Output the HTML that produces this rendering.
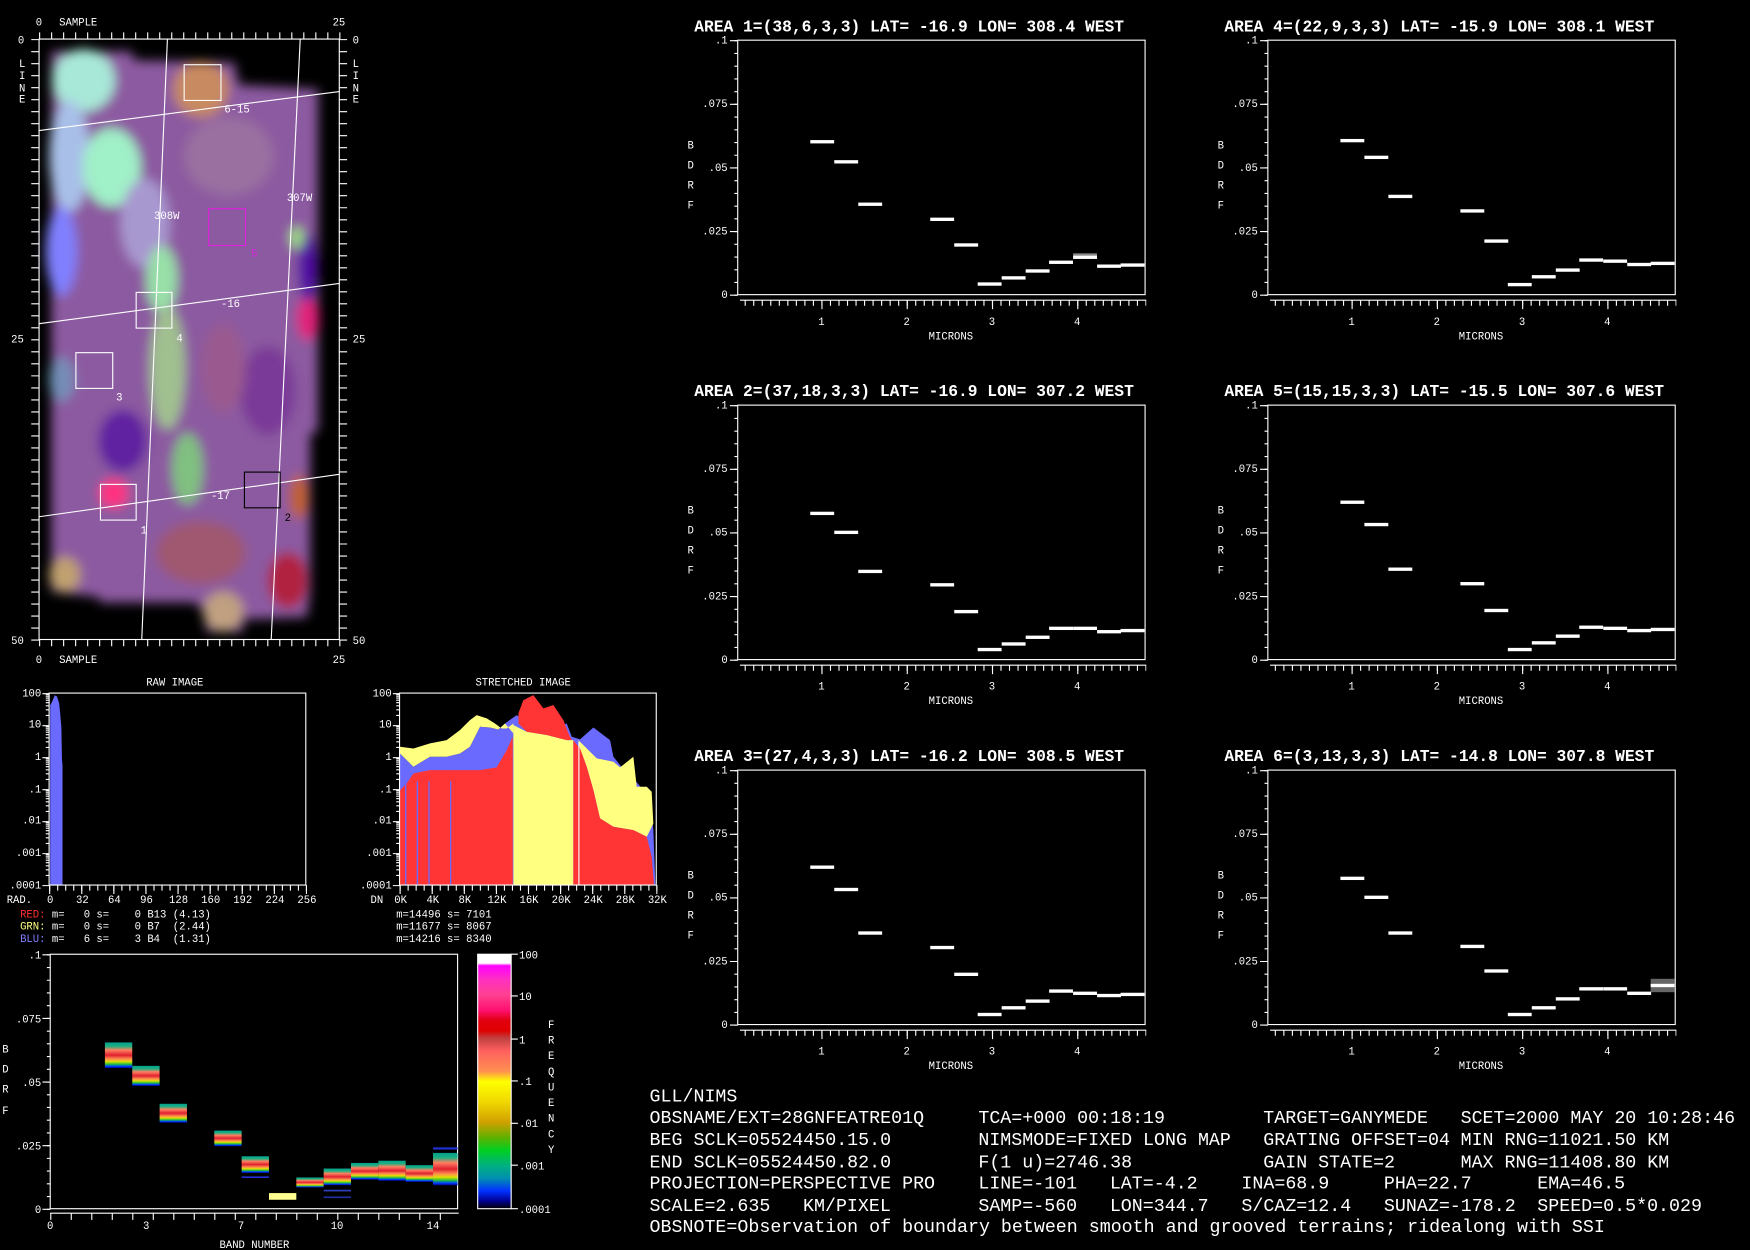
<!DOCTYPE html>
<html><head><meta charset="utf-8"><style>
html,body{margin:0;padding:0;background:#000;width:1750px;height:1250px;overflow:hidden}
svg{display:block}
text{font-family:"Liberation Mono",monospace;fill:#fff}
.s{font-size:9.5px}
.t{font-size:14.6px;font-weight:bold}
.b{font-size:16.4px}
</style></head><body>
<svg width="1750" height="1250" viewBox="0 0 1568 1120" xmlns="http://www.w3.org/2000/svg" xmlns:xlink="http://www.w3.org/1999/xlink">
<defs>
<filter id="bl" x="-10%" y="-10%" width="120%" height="120%"><feGaussianBlur stdDeviation="5"/></filter>
<linearGradient id="cb" x1="0" y1="0" x2="0" y2="1">
<stop offset="0" stop-color="#fff"/><stop offset="0.035" stop-color="#fff"/><stop offset="0.045" stop-color="#ff00ff"/>
<stop offset="0.1" stop-color="#ff30c0"/><stop offset="0.16" stop-color="#ff4090"/><stop offset="0.22" stop-color="#ff1070"/>
<stop offset="0.26" stop-color="#e00010"/><stop offset="0.3" stop-color="#e00000"/><stop offset="0.33" stop-color="#c04040"/>
<stop offset="0.38" stop-color="#ff6060"/><stop offset="0.46" stop-color="#ff9050"/>
<stop offset="0.5" stop-color="#ffff00"/><stop offset="0.58" stop-color="#f0d800"/><stop offset="0.66" stop-color="#d0a000"/>
<stop offset="0.72" stop-color="#60b000"/><stop offset="0.77" stop-color="#00d020"/><stop offset="0.83" stop-color="#00b080"/>
<stop offset="0.88" stop-color="#0090b0"/><stop offset="0.93" stop-color="#0030ff"/><stop offset="0.97" stop-color="#000090"/><stop offset="1" stop-color="#000"/>
</linearGradient>
<linearGradient id="bk" x1="0" y1="0" x2="0" y2="1">
<stop offset="0" stop-color="#00a090"/><stop offset="0.15" stop-color="#20b080"/><stop offset="0.3" stop-color="#ff8060"/>
<stop offset="0.5" stop-color="#e02030"/><stop offset="0.65" stop-color="#ff9050"/><stop offset="0.75" stop-color="#e0e000"/>
<stop offset="0.85" stop-color="#20c040"/><stop offset="0.93" stop-color="#0040ff"/><stop offset="1" stop-color="#000090"/>
</linearGradient>
<g id="fr" stroke="#fff" fill="none">
<rect x="661" y="36" width="365" height="228"/>
<line x1="659.5" y1="36" x2="659.5" y2="265" stroke-width="3" stroke-dasharray="1 10.4"/>
<line x1="657.5" y1="36" x2="657.5" y2="265" stroke-width="7" stroke-dasharray="1 56"/>
<line x1="663" y1="269" x2="1027" y2="269"/>
<line x1="667.2" y1="271.5" x2="1027" y2="271.5" stroke-width="5" stroke-dasharray="1 6.64"/>
<line x1="736" y1="273" x2="967" y2="273" stroke-width="8" stroke-dasharray="1 75.4"/>
</g>
<path id="dec" d="M-3,20.04h3M-3,14.99h3M-3,11.41h3M-3,8.63h3M-3,6.36h3M-3,4.44h3M-3,2.78h3M-3,1.31h3" stroke="#fff" fill="none"/>
<g id="hx" stroke="#fff" fill="none">
<rect x="0" y="621" width="230" height="172"/>
<line x1="-3" y1="621" x2="-3" y2="794" stroke-width="6" stroke-dasharray="1 27.67"/>
<use xlink:href="#dec" y="621"/><use xlink:href="#dec" y="649.67"/><use xlink:href="#dec" y="678.33"/>
<use xlink:href="#dec" y="707"/><use xlink:href="#dec" y="735.67"/><use xlink:href="#dec" y="764.33"/>
<line x1="0" y1="795.5" x2="231" y2="795.5" stroke-width="5" stroke-dasharray="1 6.19"/>
<line x1="0" y1="797" x2="231" y2="797" stroke-width="8" stroke-dasharray="1 27.76"/>
</g>
</defs>

<!-- top-left image -->
<g filter="url(#bl)">
<polygon points="46,46 118,46 120,54 210,56 214,76 285,80 285,385 278,390 278,530 275,553 218,555 218,566 185,566 183,548 175,540 90,540 88,535 46,530" fill="#8c5aa0"/>
<ellipse cx="75" cy="72" rx="28" ry="28" fill="#a8e8d8"/>
<ellipse cx="62" cy="140" rx="18" ry="50" fill="#a8c0e8"/>
<ellipse cx="100" cy="150" rx="26" ry="35" fill="#a0f0c8"/>
<ellipse cx="55" cy="225" rx="14" ry="40" fill="#8080ff"/>
<ellipse cx="180" cy="80" rx="25" ry="25" fill="#c88a60"/>
<ellipse cx="205" cy="140" rx="40" ry="35" fill="#9a70a0"/>
<ellipse cx="130" cy="200" rx="22" ry="40" fill="#a898d0"/>
<ellipse cx="145" cy="250" rx="14" ry="30" fill="#98e0a8"/>
<ellipse cx="150" cy="330" rx="16" ry="55" fill="#a0c090"/>
<ellipse cx="110" cy="395" rx="22" ry="28" fill="#6020a0"/>
<ellipse cx="168" cy="420" rx="14" ry="32" fill="#80c080"/>
<ellipse cx="102" cy="442" rx="13" ry="13" fill="#ff3080"/>
<ellipse cx="276" cy="285" rx="10" ry="20" fill="#e0207a"/>
<ellipse cx="276" cy="240" rx="9" ry="30" fill="#5010a0"/>
<ellipse cx="266" cy="213" rx="6" ry="10" fill="#a0e080"/>
<ellipse cx="58" cy="515" rx="14" ry="16" fill="#c0a070"/>
<ellipse cx="200" cy="548" rx="18" ry="18" fill="#c0a080"/>
<ellipse cx="258" cy="520" rx="18" ry="25" fill="#b02040"/>
<ellipse cx="180" cy="495" rx="40" ry="28" fill="#a05870"/>
<ellipse cx="268" cy="445" rx="9" ry="20" fill="#c06030"/>
<ellipse cx="240" cy="350" rx="25" ry="40" fill="#7a3a98"/>
<ellipse cx="200" cy="330" rx="20" ry="40" fill="#9a5a90"/>
<ellipse cx="55" cy="340" rx="12" ry="20" fill="#60c0d0" opacity="0.5"/>
</g>
<g stroke="#fff" stroke-width="1" fill="none">
<rect x="35" y="35" width="269" height="538"/>
<line x1="35" y1="32" x2="306" y2="32" stroke-width="6" stroke-dasharray="1 9.76"/>
<line x1="35" y1="576" x2="306" y2="576" stroke-width="6" stroke-dasharray="1 9.76"/>
<line x1="31.5" y1="35" x2="31.5" y2="575" stroke-width="7" stroke-dasharray="1 9.76"/>
<line x1="307.5" y1="35" x2="307.5" y2="575" stroke-width="7" stroke-dasharray="1 9.76"/>
<polyline points="150,35 127,573"/><polyline points="269,35 243,573"/>
<polyline points="35,117 304,82"/><polyline points="35,290 304,254"/><polyline points="35,463 304,425"/>
<rect x="165" y="58" width="33" height="32"/><rect x="122" y="262" width="32" height="32"/>
<rect x="68" y="316" width="33" height="32"/><rect x="90" y="434" width="32" height="32"/>
<rect x="187" y="187" width="33" height="33" stroke="#e020e0"/>
<rect x="219" y="423" width="32" height="32" stroke="#000"/>
</g>
<g class="s">
<text x="201" y="101">6-15</text><text x="138" y="196">308W</text><text x="257" y="180">307W</text>
<text x="225" y="230" style="fill:#e020e0">5</text><text x="198" y="275">-16</text><text x="158" y="306">4</text>
<text x="104" y="359">3</text><text x="189" y="447">-17</text><text x="126" y="478">1</text><text x="255" y="467" style="fill:#000">2</text>
<text x="32" y="23">0</text><text x="53" y="23">SAMPLE</text><text x="298" y="23">25</text>
<text x="32" y="594">0</text><text x="53" y="594">SAMPLE</text><text x="298" y="594">25</text>
<text x="16" y="39">0</text><text x="10" y="307">25</text><text x="10" y="577">50</text>
<text x="316" y="39">0</text><text x="316" y="307">25</text><text x="316" y="577">50</text>
<text x="17" y="60">L</text><text x="17" y="71">I</text><text x="17" y="82">N</text><text x="17" y="92">E</text>
<text x="316" y="60">L</text><text x="316" y="71">I</text><text x="316" y="82">N</text><text x="316" y="92">E</text>
</g>

<!-- plot titles -->
<g class="t">
<text x="622" y="28">AREA 1=(38,6,3,3) LAT= -16.9 LON= 308.4 WEST</text>
<text x="1097" y="28">AREA 4=(22,9,3,3) LAT= -15.9 LON= 308.1 WEST</text>
<text x="622" y="355">AREA 2=(37,18,3,3) LAT= -16.9 LON= 307.2 WEST</text>
<text x="1097" y="355">AREA 5=(15,15,3,3) LAT= -15.5 LON= 307.6 WEST</text>
<text x="622" y="682">AREA 3=(27,4,3,3) LAT= -16.2 LON= 308.5 WEST</text>
<text x="1097" y="682">AREA 6=(3,13,3,3) LAT= -14.8 LON= 307.8 WEST</text>
</g>

<!-- plot 1 -->
<g transform="translate(0,0)">
<use xlink:href="#fr"/>
<g class="s"><text x="652" y="39" text-anchor="end">.1</text><text x="652" y="96" text-anchor="end">.075</text><text x="652" y="153" text-anchor="end">.05</text><text x="652" y="210" text-anchor="end">.025</text><text x="652" y="267" text-anchor="end">0</text>
<text x="616" y="133">B</text><text x="616" y="151">D</text><text x="616" y="169">R</text><text x="616" y="187">F</text>
<text x="736" y="291" text-anchor="middle">1</text><text x="812.4" y="291" text-anchor="middle">2</text><text x="888.8" y="291" text-anchor="middle">3</text><text x="965.2" y="291" text-anchor="middle">4</text>
<text x="852" y="304" text-anchor="middle">MICRONS</text></g>
<g fill="#fff">
<rect x="961.5" y="227" width="21.4" height="2" fill="#888"/>
<rect x="726" y="125.5" width="21.4" height="3"/><rect x="747.5" y="143.5" width="21.4" height="3"/><rect x="769" y="181.5" width="21.4" height="3"/>
<rect x="833.5" y="195" width="21.4" height="3"/><rect x="855" y="218" width="21.4" height="3"/><rect x="876" y="253" width="21.4" height="3"/>
<rect x="897.5" y="247.5" width="21.4" height="3"/><rect x="919" y="241.3" width="21.4" height="3"/><rect x="940" y="233.5" width="21.4" height="3"/>
<rect x="961.5" y="229" width="21.4" height="3"/><rect x="983" y="237" width="21.4" height="3"/><rect x="1004" y="236" width="21.4" height="3"/>
</g></g>

<!-- plot 4 -->
<g transform="translate(475,0)">
<use xlink:href="#fr"/>
<g class="s"><text x="652" y="39" text-anchor="end">.1</text><text x="652" y="96" text-anchor="end">.075</text><text x="652" y="153" text-anchor="end">.05</text><text x="652" y="210" text-anchor="end">.025</text><text x="652" y="267" text-anchor="end">0</text>
<text x="616" y="133">B</text><text x="616" y="151">D</text><text x="616" y="169">R</text><text x="616" y="187">F</text>
<text x="736" y="291" text-anchor="middle">1</text><text x="812.4" y="291" text-anchor="middle">2</text><text x="888.8" y="291" text-anchor="middle">3</text><text x="965.2" y="291" text-anchor="middle">4</text>
<text x="852" y="304" text-anchor="middle">MICRONS</text></g>
<g fill="#fff">
<rect x="726" y="124.5" width="21.4" height="3"/><rect x="747.5" y="139.5" width="21.4" height="3"/><rect x="769" y="174.5" width="21.4" height="3"/>
<rect x="833.5" y="187.5" width="21.4" height="3"/><rect x="855" y="214.5" width="21.4" height="3"/><rect x="876" y="253.5" width="21.4" height="3"/>
<rect x="897.5" y="246.5" width="21.4" height="3"/><rect x="919" y="240.5" width="21.4" height="3"/><rect x="940" y="231.5" width="21.4" height="3"/>
<rect x="961.5" y="232.5" width="21.4" height="3"/><rect x="983" y="235.5" width="21.4" height="3"/><rect x="1004" y="234.5" width="21.4" height="3"/>
</g></g>

<!-- plot 2 -->
<g transform="translate(0,327)">
<use xlink:href="#fr"/>
<g class="s"><text x="652" y="39" text-anchor="end">.1</text><text x="652" y="96" text-anchor="end">.075</text><text x="652" y="153" text-anchor="end">.05</text><text x="652" y="210" text-anchor="end">.025</text><text x="652" y="267" text-anchor="end">0</text>
<text x="616" y="133">B</text><text x="616" y="151">D</text><text x="616" y="169">R</text><text x="616" y="187">F</text>
<text x="736" y="291" text-anchor="middle">1</text><text x="812.4" y="291" text-anchor="middle">2</text><text x="888.8" y="291" text-anchor="middle">3</text><text x="965.2" y="291" text-anchor="middle">4</text>
<text x="852" y="304" text-anchor="middle">MICRONS</text></g>
<g fill="#fff">
<rect x="726" y="131.5" width="21.4" height="3"/><rect x="747.5" y="148.5" width="21.4" height="3"/><rect x="769" y="183.5" width="21.4" height="3"/>
<rect x="833.5" y="195.5" width="21.4" height="3"/><rect x="855" y="219.5" width="21.4" height="3"/><rect x="876" y="253.5" width="21.4" height="3"/>
<rect x="897.5" y="248.5" width="21.4" height="3"/><rect x="919" y="242.5" width="21.4" height="3"/><rect x="940" y="234.5" width="21.4" height="3"/>
<rect x="961.5" y="234.5" width="21.4" height="3"/><rect x="983" y="237.5" width="21.4" height="3"/><rect x="1004" y="236.5" width="21.4" height="3"/>
</g></g>

<!-- plot 5 -->
<g transform="translate(475,327)">
<use xlink:href="#fr"/>
<g class="s"><text x="652" y="39" text-anchor="end">.1</text><text x="652" y="96" text-anchor="end">.075</text><text x="652" y="153" text-anchor="end">.05</text><text x="652" y="210" text-anchor="end">.025</text><text x="652" y="267" text-anchor="end">0</text>
<text x="616" y="133">B</text><text x="616" y="151">D</text><text x="616" y="169">R</text><text x="616" y="187">F</text>
<text x="736" y="291" text-anchor="middle">1</text><text x="812.4" y="291" text-anchor="middle">2</text><text x="888.8" y="291" text-anchor="middle">3</text><text x="965.2" y="291" text-anchor="middle">4</text>
<text x="852" y="304" text-anchor="middle">MICRONS</text></g>
<g fill="#fff">
<rect x="726" y="121.5" width="21.4" height="3"/><rect x="747.5" y="141.5" width="21.4" height="3"/><rect x="769" y="181.5" width="21.4" height="3"/>
<rect x="833.5" y="194.5" width="21.4" height="3"/><rect x="855" y="218.5" width="21.4" height="3"/><rect x="876" y="253.5" width="21.4" height="3"/>
<rect x="897.5" y="247.5" width="21.4" height="3"/><rect x="919" y="241.5" width="21.4" height="3"/><rect x="940" y="233.5" width="21.4" height="3"/>
<rect x="961.5" y="234.5" width="21.4" height="3"/><rect x="983" y="236.5" width="21.4" height="3"/><rect x="1004" y="235.5" width="21.4" height="3"/>
</g></g>

<!-- plot 3 -->
<g transform="translate(0,654)">
<use xlink:href="#fr"/>
<g class="s"><text x="652" y="39" text-anchor="end">.1</text><text x="652" y="96" text-anchor="end">.075</text><text x="652" y="153" text-anchor="end">.05</text><text x="652" y="210" text-anchor="end">.025</text><text x="652" y="267" text-anchor="end">0</text>
<text x="616" y="133">B</text><text x="616" y="151">D</text><text x="616" y="169">R</text><text x="616" y="187">F</text>
<text x="736" y="291" text-anchor="middle">1</text><text x="812.4" y="291" text-anchor="middle">2</text><text x="888.8" y="291" text-anchor="middle">3</text><text x="965.2" y="291" text-anchor="middle">4</text>
<text x="852" y="304" text-anchor="middle">MICRONS</text></g>
<g fill="#fff">
<rect x="726" y="121.5" width="21.4" height="3"/><rect x="747.5" y="141.5" width="21.4" height="3"/><rect x="769" y="180.5" width="21.4" height="3"/>
<rect x="833.5" y="193.5" width="21.4" height="3"/><rect x="855" y="217.5" width="21.4" height="3"/><rect x="876" y="253.5" width="21.4" height="3"/>
<rect x="897.5" y="247.5" width="21.4" height="3"/><rect x="919" y="241.5" width="21.4" height="3"/><rect x="940" y="232.5" width="21.4" height="3"/>
<rect x="961.5" y="234.5" width="21.4" height="3"/><rect x="983" y="236.5" width="21.4" height="3"/><rect x="1004" y="235.5" width="21.4" height="3"/>
</g></g>

<!-- plot 6 -->
<g transform="translate(475,654)">
<use xlink:href="#fr"/>
<g class="s"><text x="652" y="39" text-anchor="end">.1</text><text x="652" y="96" text-anchor="end">.075</text><text x="652" y="153" text-anchor="end">.05</text><text x="652" y="210" text-anchor="end">.025</text><text x="652" y="267" text-anchor="end">0</text>
<text x="616" y="133">B</text><text x="616" y="151">D</text><text x="616" y="169">R</text><text x="616" y="187">F</text>
<text x="736" y="291" text-anchor="middle">1</text><text x="812.4" y="291" text-anchor="middle">2</text><text x="888.8" y="291" text-anchor="middle">3</text><text x="965.2" y="291" text-anchor="middle">4</text>
<text x="852" y="304" text-anchor="middle">MICRONS</text></g>
<g fill="#fff">
<rect x="1004" y="223" width="21.4" height="12" fill="#666"/>
<rect x="726" y="131.5" width="21.4" height="3"/><rect x="747.5" y="148.5" width="21.4" height="3"/><rect x="769" y="180.5" width="21.4" height="3"/>
<rect x="833.5" y="192.5" width="21.4" height="3"/><rect x="855" y="214.5" width="21.4" height="3"/><rect x="876" y="253.5" width="21.4" height="3"/>
<rect x="897.5" y="247.5" width="21.4" height="3"/><rect x="919" y="239.5" width="21.4" height="3"/><rect x="940" y="230.5" width="21.4" height="3"/>
<rect x="961.5" y="230.5" width="21.4" height="3"/><rect x="983" y="234.5" width="21.4" height="3"/><rect x="1004" y="227.5" width="21.4" height="3"/>
</g></g>

<!-- histograms -->
<polygon points="45,793 45,632 47,628 49,623 51,624 53,630 54,640 55,652 55.5,680 56,686 56,793" fill="#6a6aff"/>
<g>
<polygon points="358.4,793 358.4,675.1 370.4,687.0 385.3,678.0 400.2,678.0 412.2,675.1 421.1,669.1 430.1,651.2 439.1,651.8 446.5,653.6 452.5,648.2 463.0,640.7 468.9,645.2 489.9,654.1 507.8,648.2 512.3,660.1 519.7,662.5 531.7,651.8 546.6,663.1 549.6,678.0 555.6,685.5 567.5,697.5 576.5,707.9 582.4,716.9 585.4,743.8 587.2,793" fill="#6a6aff"/>
<polygon points="358.4,675.1 358.4,669.1 370.4,670.6 385.3,666.1 400.2,663.1 412.2,654.1 421.1,645.2 427.1,640.7 436.1,643.7 443.5,648.2 449.5,652.7 454.0,652.7 460.0,648.2 460.0,657.1 452.5,648.2 446.5,653.6 439.1,651.8 430.1,651.2 421.1,669.1 412.2,675.1 400.2,678.0 385.3,678.0 370.4,687.0" fill="#ffff80"/>
<polygon points="460.0,793 460.0,649.7 471.9,655.6 489.9,658.6 507.8,663.1 513.7,663.1 513.7,793" fill="#ffff80"/>
<polygon points="518.2,663.1 534.7,679.5 549.6,682.5 555.6,687.6 567.5,678.0 570.5,704.9 579.5,704.9 583.9,709.4 585.4,737.8 579.5,749.7 567.5,743.8 549.6,740.8 537.6,733.3 531.7,707.9 525.7,687.0 519.7,670.6" fill="#ffff80"/>
<polygon points="358.4,793 358.4,707.9 364.4,702.0 370.4,693.0 385.3,690.0 400.2,690.0 415.2,690.0 430.1,690.0 445.0,687.6 454.0,672.1 459.4,660.1 459.4,793" fill="#ff3535"/>
<polygon points="464.5,648.2 464.5,639.2 468.9,627.3 477.9,622.8 486.9,634.7 495.8,631.7 504.8,645.2 509.3,657.1 512.3,663.1 507.8,663.1 489.9,658.6 471.9,655.6" fill="#ff3535"/>
<polygon points="513.7,793 513.7,663.1 519.7,670.6 525.7,687.0 531.7,707.9 537.6,733.3 549.6,740.8 567.5,743.8 579.5,749.7 583.9,767.6 586.0,793" fill="#ff3535"/>
<rect x="362.9" y="700" width="1.2" height="93" fill="#6a6aff"/><rect x="373.4" y="700" width="1.2" height="93" fill="#6a6aff"/>
<rect x="383.8" y="700" width="1.2" height="93" fill="#6a6aff"/><rect x="403.2" y="700" width="1.2" height="93" fill="#6a6aff"/>
<rect x="518.2" y="665" width="1" height="128" fill="#fff"/>
</g>
<use xlink:href="#hx" x="44"/>
<use xlink:href="#hx" x="358"/>
<g class="s">
<text x="131" y="614">RAW IMAGE</text><text x="426" y="614">STRETCHED IMAGE</text>
<text x="37" y="624" text-anchor="end">100</text><text x="37" y="652" text-anchor="end">10</text><text x="37" y="681" text-anchor="end">1</text><text x="37" y="710" text-anchor="end">.1</text><text x="37" y="738" text-anchor="end">.01</text><text x="37" y="767" text-anchor="end">.001</text><text x="37" y="796" text-anchor="end">.0001</text>
<text x="351" y="624" text-anchor="end">100</text><text x="351" y="652" text-anchor="end">10</text><text x="351" y="681" text-anchor="end">1</text><text x="351" y="710" text-anchor="end">.1</text><text x="351" y="738" text-anchor="end">.01</text><text x="351" y="767" text-anchor="end">.001</text><text x="351" y="796" text-anchor="end">.0001</text>
<text x="6" y="809">RAD.</text><text x="332" y="809">DN</text>
<g text-anchor="middle"><text x="45" y="809">0</text><text x="73.8" y="809">32</text><text x="102.5" y="809">64</text><text x="131.3" y="809">96</text><text x="160" y="809">128</text><text x="188.8" y="809">160</text><text x="217.5" y="809">192</text><text x="246.3" y="809">224</text><text x="275" y="809">256</text>
<text x="359" y="809">0K</text><text x="387.8" y="809">4K</text><text x="416.5" y="809">8K</text><text x="445.3" y="809">12K</text><text x="474" y="809">16K</text><text x="502.8" y="809">20K</text><text x="531.5" y="809">24K</text><text x="560.3" y="809">28K</text><text x="589" y="809">32K</text></g>
<text x="18" y="822" style="fill:#ff3030">RED:</text><text x="18" y="833" style="fill:#ffff80">GRN:</text><text x="18" y="844" style="fill:#8080ff">BLU:</text>
<text x="46.5" y="822">m=</text><text x="46.5" y="833">m=</text><text x="46.5" y="844">m=</text>
<text x="75" y="822">0</text><text x="75" y="833">0</text><text x="75" y="844">6</text>
<text x="86.4" y="822">s=</text><text x="86.4" y="833">s=</text><text x="86.4" y="844">s=</text>
<text x="120.6" y="822">0</text><text x="120.6" y="833">0</text><text x="120.6" y="844">3</text>
<text x="132" y="822">B13</text><text x="132" y="833">B7</text><text x="132" y="844">B4</text>
<text x="154.8" y="822">(4.13)</text><text x="154.8" y="833">(2.44)</text><text x="154.8" y="844">(1.31)</text>
<text x="355" y="822">m=14496 s= 7101</text>
<text x="355" y="833">m=11677 s= 8067</text>
<text x="355" y="844">m=14216 s= 8340</text>
</g>

<!-- bottom band plot -->
<g stroke="#fff" fill="none">
<rect x="45" y="855" width="365" height="228"/>
<line x1="43.5" y1="855" x2="43.5" y2="1084" stroke-width="3" stroke-dasharray="1 10.4"/>
<line x1="41.5" y1="855" x2="41.5" y2="1084" stroke-width="7" stroke-dasharray="1 56"/>
<line x1="45" y1="1087" x2="411" y2="1087"/>
<line x1="45" y1="1090" x2="411" y2="1090" stroke-width="6" stroke-dasharray="1 17.37"/>
<path d="M458,855h6M458,892.4h6M458,931h6M458,968.5h6M458,1006.5h6M458,1044h6M458,1083h6"/>
</g>
<g fill="url(#bk)">
<rect x="94" y="934" width="24.5" height="23"/><rect x="118.5" y="955" width="24.5" height="18"/><rect x="143" y="989" width="24.5" height="17"/>
<rect x="192" y="1013" width="24.5" height="14"/><rect x="216.5" y="1036" width="24.5" height="15"/><rect x="241" y="1069" width="24.5" height="6" fill="#ffff90"/>
<rect x="265.5" y="1055" width="24.5" height="9"/><rect x="290" y="1047" width="24.5" height="15"/><rect x="314.5" y="1042" width="24.5" height="15"/>
<rect x="339" y="1040" width="24.5" height="18"/><rect x="363.5" y="1044" width="24.5" height="15"/><rect x="388" y="1033" width="22" height="29"/>
</g>
<rect x="290" y="1066" width="24.5" height="1.5" fill="#3040c0"/><rect x="290" y="1072" width="24.5" height="1.5" fill="#2030a0"/>
<rect x="388" y="1028" width="22" height="2" fill="#2030d0"/><rect x="216.5" y="1054" width="24.5" height="1.5" fill="#2030d0"/>
<rect x="428" y="855" width="30" height="228" fill="url(#cb)" stroke="#fff"/>
<g class="s">
<text x="465" y="859">100</text><text x="465" y="896">10</text><text x="465" y="935">1</text><text x="465" y="972">.1</text>
<text x="465" y="1010">.01</text><text x="465" y="1048">.001</text><text x="465" y="1087">.0001</text>
<text x="491" y="921">F</text><text x="491" y="935">R</text><text x="491" y="949">E</text><text x="491" y="963">Q</text><text x="491" y="977">U</text>
<text x="491" y="991">E</text><text x="491" y="1005">N</text><text x="491" y="1019">C</text><text x="491" y="1033">Y</text>
<text x="2" y="943">B</text><text x="2" y="961">D</text><text x="2" y="979">R</text><text x="2" y="998">F</text>
<text x="37" y="859" text-anchor="end">.1</text><text x="37" y="916" text-anchor="end">.075</text><text x="37" y="973" text-anchor="end">.05</text><text x="37" y="1030" text-anchor="end">.025</text><text x="37" y="1087" text-anchor="end">0</text>
<text x="45" y="1101" text-anchor="middle">0</text><text x="131" y="1101" text-anchor="middle">3</text><text x="216" y="1101" text-anchor="middle">7</text><text x="302" y="1101" text-anchor="middle">10</text><text x="388" y="1101" text-anchor="middle">14</text>
<text x="228" y="1118" text-anchor="middle">BAND NUMBER</text>
</g>

<!-- bottom text -->
<g class="b">
<text x="582" y="987">GLL/NIMS</text>
<text x="582" y="1006">OBSNAME/EXT=28GNFEATRE01Q</text><text x="876.6" y="1006">TCA=+000 00:18:19</text><text x="1131.9" y="1006">TARGET=GANYMEDE</text><text x="1308.7" y="1006">SCET=2000 MAY 20 10:28:46</text>
<text x="582" y="1026">BEG SCLK=05524450.15.0</text><text x="876.6" y="1026">NIMSMODE=FIXED LONG MAP</text><text x="1131.9" y="1026">GRATING OFFSET=04</text><text x="1308.7" y="1026">MIN RNG=11021.50 KM</text>
<text x="582" y="1046">END SCLK=05524450.82.0</text><text x="876.6" y="1046">F(1 u)=2746.38</text><text x="1131.9" y="1046">GAIN STATE=2</text><text x="1308.7" y="1046">MAX RNG=11408.80 KM</text>
<text x="582" y="1065">PROJECTION=PERSPECTIVE PRO</text><text x="876.6" y="1065">LINE=-101</text><text x="994.4" y="1065">LAT=-4.2</text><text x="1112.3" y="1065">INA=68.9</text><text x="1240" y="1065">PHA=22.7</text><text x="1377.4" y="1065">EMA=46.5</text>
<text x="582" y="1085">SCALE=2.635</text><text x="719.5" y="1085">KM/PIXEL</text><text x="876.6" y="1085">SAMP=-560</text><text x="994.4" y="1085">LON=344.7</text><text x="1112.3" y="1085">S/CAZ=12.4</text><text x="1240" y="1085">SUNAZ=-178.2</text><text x="1377.4" y="1085">SPEED=0.5*0.029</text>
<text x="582" y="1104">OBSNOTE=Observation of boundary between smooth and grooved terrains; ridealong with SSI</text>
</g>
</svg>
</body></html>
